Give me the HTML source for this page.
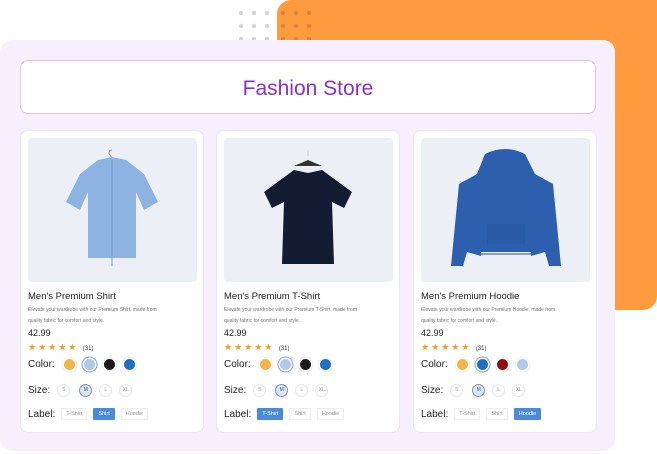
<!DOCTYPE html><html><head><style>
*{margin:0;padding:0;box-sizing:border-box}
body{width:657px;height:454px;overflow:hidden;background:#fff;font-family:"Liberation Sans",sans-serif;position:relative;color:#222}
.or{position:absolute;left:277px;top:0;width:380px;height:310px;background:#fe9b3e;border-radius:14px 0 0 0;border-bottom-right-radius:14px}
.panel{position:absolute;left:0;top:40px;width:615px;height:411px;background:#f6effd;border-radius:12px}
.hdr{position:absolute;left:20px;top:60px;width:576px;height:54px;background:#fff;border:1px solid #dcc3f3;border-radius:8px;text-align:center;line-height:56px;color:#8b2fd0;font-size:21px}
.card{position:absolute;top:130px;width:184px;height:303px;background:#fff;border:1px solid #ebe6f0;border-radius:8px}
.img{position:absolute;left:7px;top:7px;width:169px;height:144px;background:#ecf0f6;border-radius:4px}
.t{position:absolute;left:7px;top:160px;font-size:9.5px;color:#222}
.d{position:absolute;left:7px;top:174px;font-size:5px;color:#777;line-height:11px;width:142px}
.p{position:absolute;left:7px;top:197px;font-size:9px;color:#222}
.st{position:absolute;left:7px;top:211px;font-size:9px;color:#f79a1a;letter-spacing:2px}
.st span{font-size:6px;color:#333;letter-spacing:0}
.row{position:absolute;left:7px;font-size:10px;color:#222;display:flex;align-items:center}
.c{width:11px;height:11px;border-radius:50%;margin-left:9px;box-shadow:0 0 0 1.5px #fff,0 0 0 2.3px #eee}
.c.sel{box-shadow:0 0 0 1.5px #fff,0 0 0 2.5px #7aa0d6}
.s{width:13px;height:13px;border-radius:50%;border:1px solid #e6e6e6;font-size:5px;color:#999;text-align:center;line-height:11px;margin-left:7px}
.s.sel{background:#dbe6f5;border-color:#7b92b8;color:#556}
.l{font-size:5.5px;color:#999;border:1px solid #eee;padding:2px 4px;margin-left:6px;border-radius:1px}
.l.sel{background:#4a8bd8;color:#fff;border-color:#4a8bd8}
</style></head><body>
<div class="or"></div>
<svg style="position:absolute;left:0;top:0" width="657" height="60">
<g fill="#d4d4d4"><circle cx="241" cy="13" r="2.2"/><circle cx="254" cy="13" r="2.2"/><circle cx="267" cy="13" r="2.2"/><circle cx="241" cy="26" r="2.2"/><circle cx="254" cy="26" r="2.2"/><circle cx="267" cy="26" r="2.2"/><circle cx="241" cy="39" r="2.2"/><circle cx="254" cy="39" r="2.2"/><circle cx="267" cy="39" r="2.2"/></g>
<g fill="#d6873a"><circle cx="283" cy="13" r="2.2"/><circle cx="296" cy="13" r="2.2"/><circle cx="309" cy="13" r="2.2"/><circle cx="283" cy="26" r="2.2"/><circle cx="296" cy="26" r="2.2"/><circle cx="309" cy="26" r="2.2"/><circle cx="283" cy="39" r="2.2"/><circle cx="296" cy="39" r="2.2"/><circle cx="309" cy="39" r="2.2"/></g>
</svg>
<div class="panel"></div>
<div class="hdr">Fashion Store</div>

<div class="card" style="left:20px">
<div class="img"><svg width="169" height="144" viewBox="0 0 169 144"><path d="M84 12c-3 0-4 3-2 5l2 3" stroke="#999" fill="none"/><path d="M70 22l14-3 14 3 18 14 14 28-14 8-8-18v66H60V54l-8 18-14-8 14-28z" fill="#8db3e2"/><path d="M84 22v106" stroke="#6f97c8" stroke-width="1"/></svg></div>
<div class="t">Men's Premium Shirt</div>
<div class="d">Elevate your wardrobe with our Premium Shirt, made from quality fabric for comfort and style.</div>
<div class="p">42.99</div>
<div class="st">★★★★★ <span>(31)</span></div>
<div class="row" style="top:228px">Color:<div class="c" style="background:#f3b44a"></div><div class="c sel" style="background:#b0c9e4"></div><div class="c" style="background:#1b1b1b"></div><div class="c" style="background:#1f6fc4"></div></div>
<div class="row" style="top:253px">Size:<div class="s">S</div><div class="s sel" style="margin-left:9px">M</div><div class="s">L</div><div class="s">XL</div></div>
<div class="row" style="top:277px">Label:<div class="l">T-Shirt</div><div class="l sel">Shirt</div><div class="l">Hoodie</div></div>
</div>

<div class="card" style="left:216px">
<div class="img"><svg width="169" height="144" viewBox="0 0 169 144"><path d="M84 12v6" stroke="#ccc"/><path d="M70 28l14-6 14 6z" fill="#333"/><path d="M70 32l14 3 14-3 30 22-8 16-12-6 2 62H58l2-62-12 6-8-16z" fill="#141c33"/></svg></div>
<div class="t">Men's Premium T-Shirt</div>
<div class="d">Elevate your wardrobe with our Premium T-Shirt, made from quality fabric for comfort and style.</div>
<div class="p">42.99</div>
<div class="st">★★★★★ <span>(31)</span></div>
<div class="row" style="top:228px">Color:<div class="c" style="background:#f3b44a"></div><div class="c sel" style="background:#b0c9e4"></div><div class="c" style="background:#1b1b1b"></div><div class="c" style="background:#1f6fc4"></div></div>
<div class="row" style="top:253px">Size:<div class="s">S</div><div class="s sel" style="margin-left:9px">M</div><div class="s">L</div><div class="s">XL</div></div>
<div class="row" style="top:277px">Label:<div class="l sel">T-Shirt</div><div class="l">Shirt</div><div class="l">Hoodie</div></div>
</div>

<div class="card" style="left:413px">
<div class="img"><svg width="169" height="144" viewBox="0 0 169 144"><path d="M64 16q20-10 40 0l10 20 18 10 8 82h-12l-4-14-14 4v-4H60v4l-14-4-4 14H30l8-82 18-10z" fill="#2c5fae"/><path d="M66 86h38v20H66z" fill="#285aa5"/><path d="M60 116h50" stroke="#24508f"/></svg></div>
<div class="t">Men's Premium Hoodie</div>
<div class="d">Elevate your wardrobe with our Premium Hoodie, made from quality fabric for comfort and style.</div>
<div class="p">42.99</div>
<div class="st">★★★★★ <span>(31)</span></div>
<div class="row" style="top:228px">Color:<div class="c" style="background:#f3b44a"></div><div class="c sel" style="background:#1f6fc4"></div><div class="c" style="background:#8e0f14"></div><div class="c" style="background:#b0c9e4"></div></div>
<div class="row" style="top:253px">Size:<div class="s">S</div><div class="s sel" style="margin-left:9px">M</div><div class="s">L</div><div class="s">XL</div></div>
<div class="row" style="top:277px">Label:<div class="l">T-Shirt</div><div class="l">Shirt</div><div class="l sel">Hoodie</div></div>
</div>
</body></html>
